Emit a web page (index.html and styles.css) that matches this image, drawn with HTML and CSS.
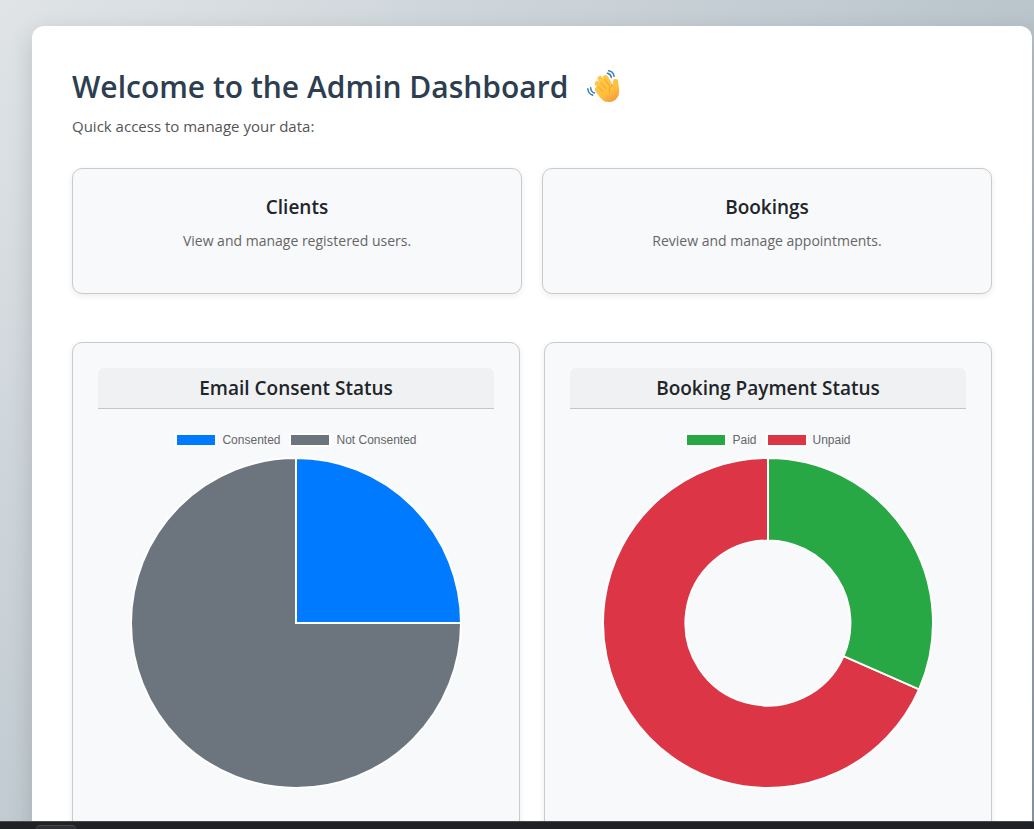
FILE: index.html
```html
<!DOCTYPE html>
<html lang="en">
<head>
<meta charset="utf-8">
<meta name="viewport" content="width=device-width, initial-scale=1">
<title>Admin Dashboard</title>
<link rel="stylesheet" href="styles.css">
</head>
<body>
<div class="viewport">
  <main class="panel">
    <h1 class="title">Welcome to the Admin Dashboard
      <svg class="wave" viewBox="0 0 36 36" role="img" aria-label="Waving hand">
        <defs>
          <linearGradient id="skin" gradientUnits="userSpaceOnUse" x1="12" y1="6" x2="30" y2="34">
            <stop offset="0" stop-color="#ffc94a"/>
            <stop offset="0.6" stop-color="#ffbf3c"/>
            <stop offset="1" stop-color="#f09240"/>
          </linearGradient>
        </defs>
        <g fill="none" stroke="url(#skin)" stroke-width="5" stroke-linecap="round">
          <path d="M11.200 14.500 17 22"/>
          <path d="M14 9.500 21 19"/>
          <path d="M19.500 8.500 24.500 18"/>
          <path d="M11.300 20.500 17 26"/>
        </g>
        <path fill="url(#skin)" d="M9.500 22 12 15l5-5 4.800-2.500L26.500 16c.4-1.700.3-3.300.8-4.600.8-2.200 5-1.700 4.900 1 0 3.300 1.100 6.300 1 10.600-.2 5-3.700 9-8.500 9.900-4.900.8-8.400-1.300-11-4.900z"/>
        <path fill="none" stroke="#e59a2c" stroke-width="0.8" stroke-linecap="round" d="m12.500 17.800 4.500 5M15 13.500l5 6.200M19 10.600l4.600 6.500M26.600 16c-2.700 1.400-3.700 3.700-2.900 6.800"/>
        <g fill="none" stroke="#3c82b8" stroke-width="1.500" stroke-linecap="round">
          <path d="M21.300 4.300c2.300.4 3.700 1.900 4.100 4.100M22.500 1.700c3.300.5 5.200 2.600 5.600 5.600"/>
          <path d="M4.700 18.700c.1 2.700 1.300 4.400 3.700 5.300M1.800 19.800c.3 3.400 2 5.500 4.900 6.400"/>
        </g>
      </svg>
    </h1>
    <p class="lead">Quick access to manage your data:</p>

    <section class="links">
      <article class="card link-card">
        <h2 class="card-title">Clients</h2>
        <p class="card-text">View and manage registered users.</p>
      </article>
      <article class="card link-card">
        <h2 class="card-title">Bookings</h2>
        <p class="card-text">Review and manage appointments.</p>
      </article>
    </section>

    <section class="charts">
      <article class="card chart-card">
        <h2 class="chart-title">Email Consent Status</h2>
        <ul class="legend">
          <li class="legend-item"><span class="swatch blue"></span>Consented</li>
          <li class="legend-item"><span class="swatch gray"></span>Not Consented</li>
        </ul>
        <svg class="chart" viewBox="-166 -166 332 332" role="img" aria-label="Consented 25%, not consented 75%">
          <path class="slice gray" d="M0 0V-165A165 165 0 1 0 165 0Z"/>
          <path class="slice blue" d="M0 0V-165A165 165 0 0 1 165 0Z"/>
        </svg>
      </article>
      <article class="card chart-card">
        <h2 class="chart-title">Booking Payment Status</h2>
        <ul class="legend">
          <li class="legend-item"><span class="swatch green"></span>Paid</li>
          <li class="legend-item"><span class="swatch red"></span>Unpaid</li>
        </ul>
        <svg class="chart" viewBox="-166 -166 332 332" role="img" aria-label="Paid 32%, unpaid 68%">
          <path class="slice red" d="M0 -165A165 165 0 1 0 151.100 66.300L75.500 33.100A82.500 82.500 0 1 1 0 -82.500Z"/>
          <path class="slice green" d="M0 -165A165 165 0 0 1 151.100 66.300L75.500 33.100A82.500 82.500 0 0 0 0 -82.500Z"/>
        </svg>
      </article>
    </section>
  </main>
</div>
<footer class="taskbar"><div class="task"></div></footer>
</body>
</html>
```
FILE: styles.css
```css
* { box-sizing: border-box; }

body {
  margin: 0;
  height: 100vh;
  display: flex;
  flex-direction: column;
  font-family: "Open Sans", "Noto Sans", sans-serif;
  font-size: 16px;
  line-height: 24px;
  color: #212529;
  background: linear-gradient(135deg, #e0e4e7, #bac5cc 55%, #8c9ba8);
}

h1, h2, p, ul { margin: 0; padding: 0; }

.viewport {
  flex: 1;
  min-height: 0;
  overflow: hidden;
  padding: 26px 2px 0 32px;
}

.panel {
  padding: 41px 40px 80px;
  background: #fff;
  border-radius: 12px;
  box-shadow: 0 8px 24px rgba(0, 0, 0, 0.15);
}

.title {
  display: flex;
  align-items: center;
  gap: 18px;
  margin-bottom: 7px;
  font-size: 30px;
  font-weight: 600;
  line-height: 40px;
  color: #2c3e50;
}

.wave { width: 36px; height: 36px; }

.lead {
  margin-bottom: 30px;
  font-size: 15px;
  color: #555;
}

.card {
  background: #f8f9fb;
  border: 1px solid #c8cacc;
  border-radius: 10px;
  box-shadow: 0 2px 6px rgba(0, 0, 0, 0.08);
  text-align: center;
}

.links {
  display: grid;
  grid-template-columns: 1fr 1fr;
  gap: 20px;
  margin-bottom: 48px;
}

.link-card { padding: 25px 24px 40px; }

.card-title {
  margin-bottom: 9px;
  font-size: 19px;
  font-weight: 600;
  line-height: 26px;
}

.card-text { font-size: 14px; color: #666; }

.charts {
  display: grid;
  grid-template-columns: 1fr 1fr;
  gap: 24px;
}

.chart-card { padding: 25px 25px 48px; }

.chart-title {
  padding: 8px 16px;
  font-size: 19px;
  font-weight: 600;
  line-height: 24px;
  background: #f0f1f3;
  border-bottom: 1px solid #c4c6c8;
  border-radius: 6px 6px 0 0;
}

.legend {
  display: flex;
  justify-content: center;
  gap: 9px;
  margin: 24px 0 10px;
  list-style: none;
  font-family: "Liberation Sans", Arial, sans-serif;
  font-size: 12px;
  line-height: 14px;
  color: #666;
}

.legend-item { display: flex; align-items: center; gap: 5px; }

.swatch {
  width: 42px;
  height: 14px;
  border: 2px solid #fff;
}

.chart {
  display: block;
  width: 100%;
  max-width: 332px;
  margin: 0 auto;
}

.slice { stroke: #fff; stroke-width: 2; }

.blue { background: #007bff; fill: #007bff; }
.gray { background: #6c757d; fill: #6c757d; }
.green { background: #28a745; fill: #28a745; }
.red { background: #dc3545; fill: #dc3545; }

.taskbar {
  height: 8px;
  padding: 3px 36px 0;
  background: #202124;
  border-top: 1px solid #48494b;
}

.task {
  width: 40px;
  height: 4px;
  background: #303134;
  border-top: 1px solid #48494b;
  border-radius: 4px 4px 0 0;
}
```
